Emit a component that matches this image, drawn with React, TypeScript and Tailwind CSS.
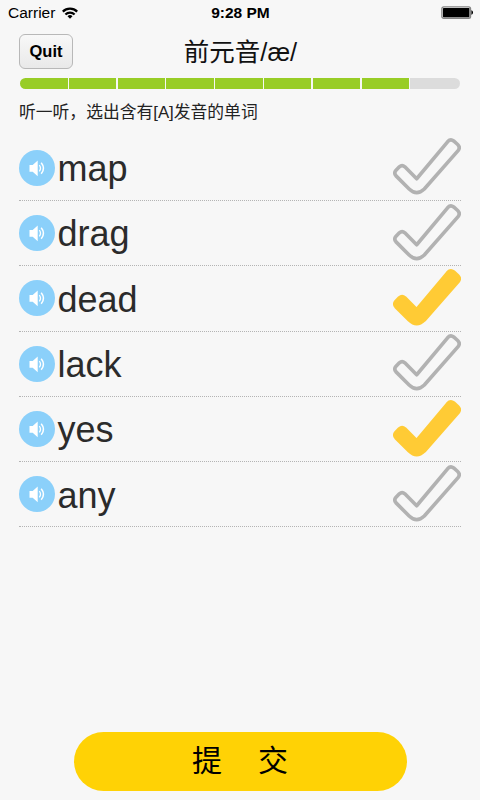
import { useState } from "react";
import clsx from "clsx";

const WORDS = ["map", "drag", "dead", "lack", "yes", "any"];
const TOTAL_STEPS = 9;
const DONE_STEPS = 8;

const StatusBar = () => (
  <div className="grid h-[26px] grid-cols-3 items-center pl-2 pr-[7px] text-[15.5px] text-black">
    <div className="flex items-center gap-[7px]">
      <span>Carrier</span>
      <svg width="16" height="12" viewBox="0 0 16 12" fill="none" stroke="black" strokeWidth="2.2">
        <path d="M0.8 4.6a10.3 10.3 0 0 1 14.4 0" />
        <path d="M3.4 7.5a6.6 6.6 0 0 1 9.2 0" />
        <path d="M8 11.8 5.5 9.3a3.6 3.6 0 0 1 5 0z" fill="black" stroke="none" />
      </svg>
    </div>
    <span className="text-center font-bold">9:28 PM</span>
    <svg className="mb-px justify-self-end" width="32" height="13" viewBox="0 0 32 13">
      <rect x="0.9" y="0.9" width="28.6" height="11.4" rx="1.8" fill="none" stroke="#858585" strokeWidth="1.4" />
      <rect x="2" y="2" width="26.4" height="9.2" rx="0.6" fill="black" />
      <path d="M30.4 4.3c2.2.5 2.2 4 0 4.5z" fill="black" />
    </svg>
  </div>
);

const SpeakerButton = () => (
  <button className="flex size-9 shrink-0 items-center justify-center rounded-full bg-[#8bd0fa]">
    <svg width="36" height="36" viewBox="0 0 36 36" fill="none" stroke="white">
      <path d="M10.5 15h3.2l5-4.6v15.8l-5-4.5h-3.2z" fill="white" stroke="none" />
      <path d="M20.3 15.2q2.4 3.1 0 6.2" strokeWidth="1.3" />
      <path d="M22.2 12.8q4.6 5.5 0 11" strokeWidth="1.5" />
    </svg>
  </button>
);

const CheckMark = ({ checked }: { checked: boolean }) => (
  <svg width="68" height="59" viewBox="0.5 0 69.5 60" className="mb-[2px] shrink-0">
    <path
      d="M7 30.3Q9.8 27.8 12.6 30.3L24.7 42.5 56.5 4.5Q59.3 1.4 62.5 3.9L66.6 7.5Q69.6 10.4 67 13.8L32.5 53Q24.7 60.5 17 53L3.6 39.6Q1 36.6 3.6 33.8Z"
      fill={checked ? "#ffcb35" : "none"}
      stroke={checked ? "#ffcb35" : "#b2b2b2"}
      strokeWidth="3.7"
      strokeLinejoin="round"
    />
  </svg>
);

export default function App() {
  const [selected, setSelected] = useState<string[]>(["dead", "yes"]);

  const toggle = (word: string) =>
    setSelected((prev) =>
      prev.includes(word) ? prev.filter((w) => w !== word) : [...prev, word]
    );

  return (
    <div className="flex h-[800px] w-[480px] flex-col overflow-hidden bg-[#f7f7f7] font-['Liberation_Sans','Noto_Sans_CJK_SC',sans-serif]">
      <StatusBar />

      <header className="mt-[7px] grid h-[35px] grid-cols-[54px_1fr_54px] items-center px-[19px]">
        <button className="h-[35px] rounded-md border border-[#b8b8b8] bg-linear-to-b from-[#f8f8f8] to-[#e9e9e9] text-[16.5px] font-bold text-black">
          Quit
        </button>
        <h1 className="pt-[2px] pl-px text-center text-[25.5px] leading-[35px] text-[#111]">
          前元音/æ/
        </h1>
      </header>

      <div className="ml-5 mt-[10px] flex h-[11px] w-[440px] gap-[1.3px] overflow-hidden rounded-full">
        {Array.from({ length: TOTAL_STEPS }, (_, i) => (
          <div
            key={i}
            className={clsx(
              i < DONE_STEPS ? "w-[47.5px] bg-[#98cd26]" : "flex-1 bg-[#dcdcdc]"
            )}
          />
        ))}
      </div>

      <p className="mt-3 px-[19px] text-[16.8px] leading-6 text-[#222]">
        听一听，选出含有[A]发音的单词
      </p>

      <ul className="mt-[10.7px] px-[19px]">
        {WORDS.map((word) => (
          <li
            key={word}
            className="flex h-[65.3px] items-center border-b border-dotted border-[#b4b4b4]"
            onClick={() => toggle(word)}
          >
            <SpeakerButton />
            <span className="ml-[2.5px] flex-1 pt-[2.5px] text-4xl text-[#2b2b2b]">{word}</span>
            <CheckMark checked={selected.includes(word)} />
          </li>
        ))}
      </ul>

      <button className="mx-auto mt-auto mb-[9px] h-[59px] w-[333px] rounded-full bg-[#ffd205] pb-[2px] text-[30px] text-black">
        提<span className="inline-block w-9" />交
      </button>
    </div>
  );
}
